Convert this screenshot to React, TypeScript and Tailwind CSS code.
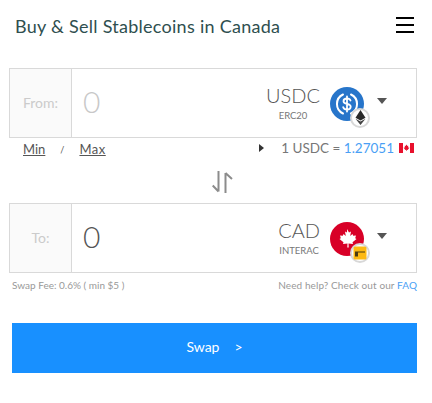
import { useState } from 'react';

function UsdcIcon() {
  return (
    <div className="relative w-[34px] h-[34px] shrink-0">
      <svg viewBox="0 0 34 34" className="w-[34px] h-[34px]">
        <circle cx="17" cy="17" r="17" fill="#2775ca" />
        <path d="M13 7.500a10.500 10.500 0 0 0 0 19M21 7.500a10.500 10.500 0 0 1 0 19" fill="none" stroke="#fff" strokeWidth="2" strokeLinecap="round" />
        <path d="M20.500 13.500c-.5-1.300-1.800-2-3.500-2-2 0-3.500 1-3.500 2.700 0 3.800 7.200 1.800 7.200 5.500 0 1.800-1.600 2.800-3.700 2.800-1.900 0-3.300-.8-3.800-2.300M17 9.500v15" fill="none" stroke="#fff" strokeWidth="1.800" strokeLinecap="round" />
      </svg>
      <div className="absolute left-[20px] top-[21px] w-5 h-5 rounded-full bg-white border-2 border-[#d8d8d8] flex items-center justify-center">
        <svg viewBox="0 0 12 18" className="w-[11px] h-[15px]">
          <path d="M6 0 0 9.200 6 12.500 12 9.200Z" fill="#2a2a2a" />
          <path d="M6 13.800 0 10.500 6 18 12 10.500Z" fill="#444" />
        </svg>
      </div>
    </div>
  );
}

function CadIcon() {
  return (
    <div className="relative w-[34px] h-[34px] shrink-0">
      <svg viewBox="0 0 34 34" className="w-[34px] h-[34px]">
        <circle cx="17" cy="17" r="17" fill="#d80027" />
        <path d="M17 7l2 3.500 2-1-.8 4.500 2.300-2 .7 1.800 2.800-.4-.8 2.800 1.300.8-4 3.300.5 1.700-4.500-.6.200 4h-1.400l.2-4-4.500.6.500-1.700-4-3.300 1.300-.8-.8-2.800 2.800.4.700-1.800 2.300 2-.8-4.500 2 1z" fill="#fff" />
      </svg>
      <div className="absolute left-[20px] top-[21px] w-5 h-5 rounded-full bg-white border-2 border-[#d8d8d8] flex items-center justify-center">
        <svg viewBox="0 0 14 14" className="w-[14px] h-[14px]">
          <rect x="0.500" y="0.500" width="13" height="13" rx="1.500" fill="#fdb913" />
          <path d="M2 5.500h10v1H5v4H2z" fill="#4a3b10" />
        </svg>
      </div>
    </div>
  );
}

function Caret() {
  return <div className="w-0 h-0 border-x-[5.500px] border-x-transparent border-t-[6px] border-t-[#555] ml-[13px] mb-[6px]" />;
}

function CurrencyRow({ label, value, valueColor, code, network, icon }: { label: string; value: string; valueColor: string; code: string; network: string; icon: React.ReactNode }) {
  return (
    <div className="mx-[9px] w-[408px] h-[70px] border border-[#d9d9d9] flex">
      <div className="w-[62px] shrink-0 bg-[#fafafa] border-r border-[#d9d9d9] flex items-center justify-center pb-[2px] text-[14px] text-[#cbcbcb]">
        {label}
      </div>
      <div className={`flex-1 pl-[11px] pb-[4px] flex items-center text-[30px] font-light ${valueColor}`}>{value}</div>
      <div className="flex flex-col items-end pr-[10px]">
        <div className="text-[20px] leading-[24px] mt-[14px] text-[#555] font-light">{code}</div>
        <div className="text-[9.500px] leading-[12px] mt-[3px] text-[#777] self-center">{network}</div>
      </div>
      <div className="flex items-center pt-[1px] pr-[29px]">
        {icon}
        <Caret />
      </div>
    </div>
  );
}

export default function App() {
  const [from] = useState('0');
  return (
    <div className="w-[432px] h-[403px] bg-white font-['Lato','Noto_Sans',sans-serif] overflow-hidden">
      <header className="h-[68px] flex justify-between pl-[15px] pr-[18px] pt-[13px]">
        <h1 className="text-[18px] leading-[26px] text-[#2f4f4f] tracking-[0.27px]">Buy &amp; Sell Stablecoins in Canada</h1>
        <div className="w-[18px] h-[16px] mt-[4px] flex flex-col justify-between">
          <span className="h-[2px] bg-black" />
          <span className="h-[2px] bg-black" />
          <span className="h-[2px] bg-black" />
        </div>
      </header>

      <CurrencyRow label="From:" value={from} valueColor="text-[#c8c8c8]" code="USDC" network="ERC20" icon={<UsdcIcon />} />

      <div className="h-[23px] flex items-center justify-between pl-[23px] pr-[18px]">
        <div className="flex items-center text-[13px] text-[#555]">
          <a className="underline">Min</a>
          <span className="mx-[15px] text-[9px]">/</span>
          <a className="underline tracking-[0.5px]">Max</a>
        </div>
        <div className="flex items-center text-[13.500px] text-[#777] mb-[3px]">
          <span className="w-0 h-0 border-y-[4px] border-y-transparent border-l-[5px] border-l-[#333] mr-[17px]" />
          <span>1 USDC = <span className="text-[#4a9ff5]">1.27051</span></span>
          <svg viewBox="0 0 15 10" className="w-[15px] h-[10px] ml-[5px]">
            <rect width="15" height="10" fill="#fff" />
            <rect width="4" height="10" fill="#e8112d" />
            <rect x="11" width="4" height="10" fill="#e8112d" />
            <path d="M7.500 1.500l1 1.500 .8-.3-.3 2 1-.5.300.8-1.300 1.200.2 .8-1.400-.2v1.200h-.6V6.800l-1.400 .2 .2-.8-1.300-1.200 .3-.8 1 .5-.3-2 .8 .3z" fill="#e8112d" />
          </svg>
        </div>
      </div>

      <div className="h-[42px] flex items-center justify-center pl-[12px]">
        <svg viewBox="0 0 21 22" className="w-[21px] h-[22px]" fill="none" stroke="#8c8c8c" strokeWidth="2">
          <path d="M6.500 0v20.500M.7 14.500l5.800 6" />
          <path d="M13.500 22V2M20 8l-6.500-6" />
        </svg>
      </div>

      <CurrencyRow label="To:" value="0" valueColor="text-[#555]" code="CAD" network="INTERAC" icon={<CadIcon />} />

      <div className="h-[24px] flex items-center justify-between pl-[12px] pr-[15px] text-[10px] text-[#999]">
        <span>Swap Fee: 0.6% ( min $5 )</span>
        <span className="tracking-[0.1px]">Need help? Check out our <span className="text-[#4a9ff5]">FAQ</span></span>
      </div>

      <button className="block mx-[12px] mt-[26px] w-[405px] h-[50px] pb-[3px] bg-[#1890ff] text-white text-[14px]">
        Swap
        <span className="ml-[15px]">&gt;</span>
      </button>
    </div>
  );
}
